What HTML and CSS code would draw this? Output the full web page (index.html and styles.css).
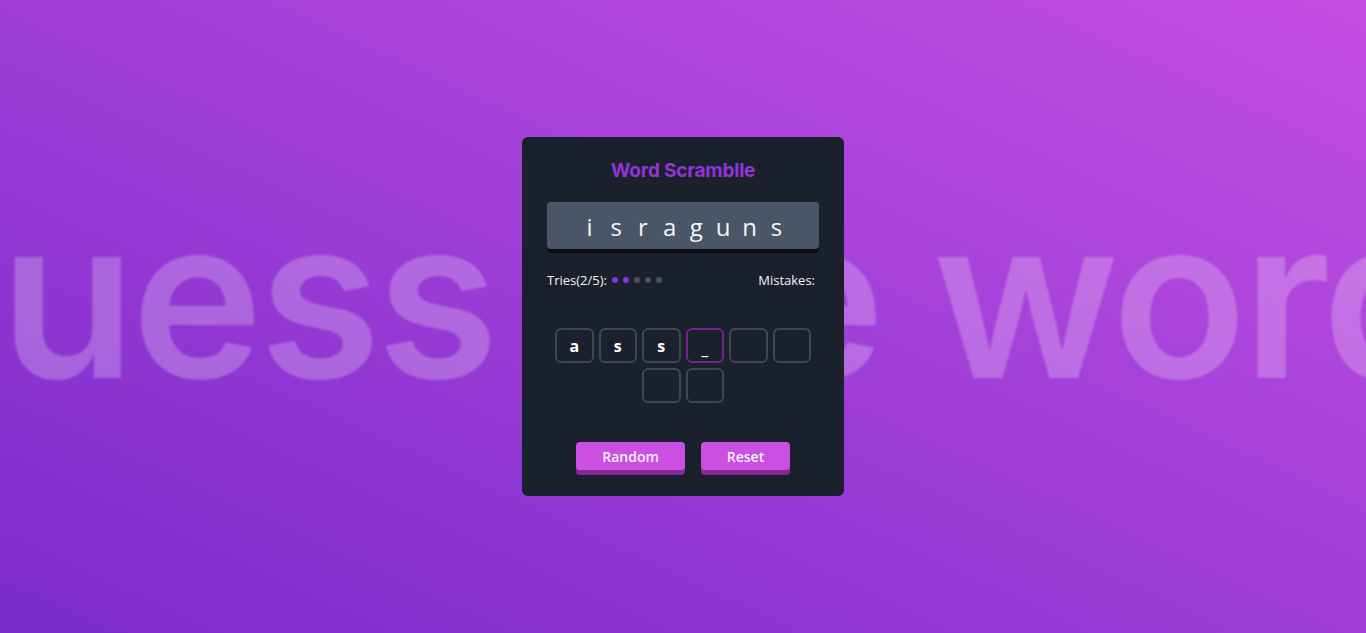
FILE: index.html
```html
<!DOCTYPE html>
<html lang="en">
<head>
<meta charset="utf-8">
<title>Word Scramblle</title>
<link rel="stylesheet" href="styles.css">
</head>
<body>
<div class="backdrop"><span class="backdrop-text">Guess the word</span></div>
<main class="stage">
  <section class="card">
    <h1 class="title">Word Scramblle</h1>
    <div class="scrambled">
      <span>i</span><span>s</span><span>r</span><span>a</span><span>g</span><span>u</span><span>n</span><span>s</span>
    </div>
    <div class="status">
      <div class="tries">Tries(2/5):
        <span class="dots"><i class="dot on"></i><i class="dot on"></i><i class="dot"></i><i class="dot"></i><i class="dot"></i></span>
      </div>
      <div class="mistakes">Mistakes:</div>
    </div>
    <div class="tiles">
      <div class="tile">a</div>
      <div class="tile">s</div>
      <div class="tile">s</div>
      <div class="tile active">_</div>
      <div class="tile"></div>
      <div class="tile"></div>
      <div class="tile"></div>
      <div class="tile"></div>
    </div>
    <div class="actions">
      <button class="btn btn-random">Random</button>
      <button class="btn btn-reset">Reset</button>
    </div>
  </section>
</main>
</body>
</html>
```

FILE: styles.css
```css
* { box-sizing: border-box; }
html, body { margin: 0; padding: 0; height: 100%; }
body {
  font-family: "Open Sans", "Liberation Sans", sans-serif;
  background: linear-gradient(to top right, #7a2bca 0%, #a23fd9 55%, #c44fe1 100%);
  overflow: hidden;
  color: #fff;
}
.backdrop {
  position: fixed;
  inset: 0;
  display: flex;
  align-items: center;
  justify-content: center;
  overflow: hidden;
  pointer-events: none;
}
.backdrop-text {
  font-family: "Inter", "Open Sans", sans-serif;
  font-weight: 600;
  font-size: 222px;
  letter-spacing: -4px;
  white-space: nowrap;
  color: rgba(255, 255, 255, 0.24);
  filter: blur(1px);
  line-height: 1;
  transform: translate(-36px, -19px);
}
.stage {
  position: relative;
  height: 100%;
  display: flex;
  align-items: center;
  justify-content: center;
}
.card {
  width: 322px;
  background: #1a202c;
  border-radius: 6px;
  padding: 22px 25px 26px;
  display: flex;
  flex-direction: column;
  align-items: stretch;
}
.title {
  margin: 0;
  text-align: center;
  font-family: "Inter", "Open Sans", sans-serif;
  font-size: 19px;
  line-height: 24px;
  font-weight: 700;
  color: #9233d6;
  letter-spacing: -0.2px;
}
.scrambled {
  margin-top: 19px;
  height: 47px;
  background: #4a5568;
  border-radius: 4px;
  box-shadow: 0 4px 0 #0b0e16;
  display: flex;
  align-items: center;
  justify-content: center;
  font-size: 24px;
  color: #f5f5f7;
}
.scrambled span {
  width: 26.7px;
  text-align: center;
  line-height: 1;
  margin-top: 2px;
}
.status {
  margin-top: 22px;
  display: flex;
  justify-content: space-between;
  align-items: center;
  font-size: 13px;
  line-height: 18px;
  color: #f3f3f6;
  padding-right: 4px;
}
.tries { display: flex; align-items: center; gap: 4px; }
.dots { display: flex; gap: 5px; margin-left: 1px; }
.dot {
  display: block;
  width: 6px;
  height: 6px;
  border-radius: 50%;
  background: #4a5060;
}
.dot.on { background: #8a33e0; }
.tiles {
  margin-top: 39px;
  display: flex;
  flex-wrap: wrap;
  justify-content: center;
  gap: 5px;
}
.tile {
  width: 38.5px;
  height: 35px;
  border: 2px solid #3e4756;
  border-radius: 6px;
  display: flex;
  align-items: center;
  justify-content: center;
  font-size: 16px;
  font-weight: 700;
  color: #fff;
}
.tile.active { border-color: #7a1f94; padding-top: 6px; }
.actions {
  margin-top: 39px;
  display: flex;
  justify-content: center;
  gap: 16px;
}
.btn {
  height: 28px;
  border: none;
  border-radius: 4px;
  background: #c950e2;
  box-shadow: 0 5px 0 #86289a;
  color: #fbeefe;
  font-family: "Open Sans", sans-serif;
  font-size: 14px;
  font-weight: 600;
  padding: 0;
  cursor: pointer;
}
.btn-random { width: 109px; }
.btn-reset { width: 89px; }
```
